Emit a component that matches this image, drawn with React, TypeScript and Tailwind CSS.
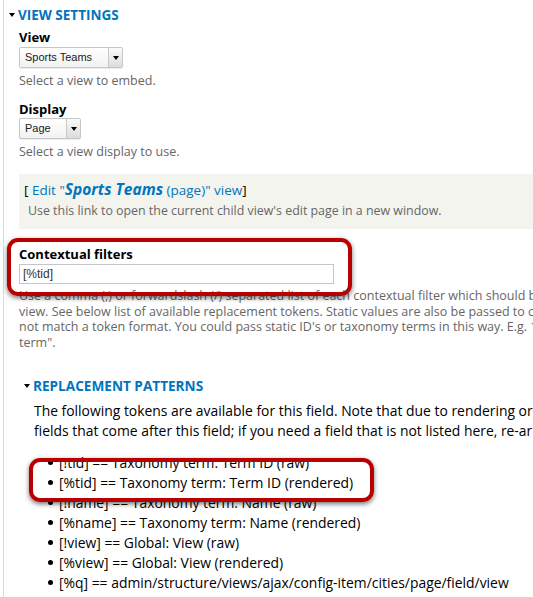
import React from 'react';

const font = 'font-["Lucida_Grande","Open_Sans",sans-serif]';

const Arrow = () => (
  <span className="inline-block w-0 h-0 border-l-[3.5px] border-r-[3.5px] border-t-[4px] border-l-transparent border-r-transparent border-t-black" />
);

const Select = ({ value, width }: { value: string; width: string }) => (
  <div
    className={`flex h-[21px] ${width} border border-[#c6c6c6] rounded-[2px] bg-gradient-to-b from-white to-[#f2f2f2] shadow-[0_1px_1px_rgba(0,0,0,0.08)]`}
  >
    <span className='flex-1 pl-[5px] flex items-center text-[11px] text-[#222] font-["Liberation_Sans",Arial,sans-serif]'>
      {value}
    </span>
    <span className="w-[14px] flex items-center justify-center border-l border-[#c8c8c8] bg-gradient-to-b from-[#fafafa] to-[#dcdcdc]">
      <Arrow />
    </span>
  </div>
);

const Annotation = ({ className }: { className: string }) => (
  <div
    className={`absolute border-[4px] border-[#b80000] rounded-[11px] shadow-[0_2px_5px_rgba(0,0,0,0.55)] ${className}`}
  />
);

const tokens = [
  '[!tid] == Taxonomy term: Term ID (raw)',
  '[%tid] == Taxonomy term: Term ID (rendered)',
  '[!name] == Taxonomy term: Name (raw)',
  '[%name] == Taxonomy term: Name (rendered)',
  '[!view] == Global: View (raw)',
  '[%view] == Global: View (rendered)',
  '[%q] == admin/structure/views/ajax/config-item/cities/page/field/view',
];

export default function App() {
  return (
    <div className={`relative w-[533px] h-[597px] overflow-hidden bg-white ${font}`}>
      <div className="ml-[3px] h-full w-[760px] border-l border-[#d9d9d9] pl-[15px] pt-[5px]">
        <div className="h-[20px] -ml-[10px] flex items-center gap-[3px] text-[13.5px] font-bold text-[#0074bd] uppercase">
          <Arrow />
          View settings
        </div>

        <div className="mt-[4px] h-[16px] leading-[16px] text-[13px] font-bold text-black">View</div>
        <div className="mt-[2px]">
          <Select value="Sports Teams" width="w-[104px]" />
        </div>
        <div className="mt-[5px] h-[16px] leading-[16px] text-[12.5px] text-[#666]">Select a view to embed.</div>

        <div className="mt-[12px] h-[16px] leading-[16px] text-[13px] font-bold text-black">Display</div>
        <div className="mt-[1px]">
          <Select value="Page" width="w-[62px]" />
        </div>
        <div className="mt-[5px] h-[16px] leading-[16px] text-[12.5px] text-[#666]">
          Select a view display to use.
        </div>

        <div className="mt-[14px] h-[55px] bg-[#f4f4ef] pl-[5px] pt-[6px]">
          <div className="h-[18px] leading-[18px] text-[13.5px] text-black">
            [<span className="text-[#0074bd]">
              {' '}Edit "<span className="font-bold italic text-[15.5px]">Sports Teams</span> (page)" view
            </span>]
          </div>
          <div className="mt-[5px] pl-[4px] h-[16px] leading-[16px] text-[12.4px] text-[#666]">
            Use this link to open the current child view's edit page in a new window.
          </div>
        </div>

        <div className="mt-[17px] h-[16px] leading-[16px] text-[13px] font-bold text-black">Contextual filters</div>
        <div className="mt-[2px] w-[315px] h-[20px] border border-[#c6c6c6] flex items-center pl-[3px] text-[12px] text-[#333] font-['Liberation_Sans',Arial,sans-serif]">
          [%tid]
        </div>
        <div className="mt-[4px] text-[12.5px] leading-[15.7px] text-[#666] whitespace-nowrap">
          <div>Use a comma (,) or forwardslash (/) separated list of each contextual filter which should be forwarded to the</div>
          <div>view. See below list of available replacement tokens. Static values are also be passed to child views if they do</div>
          <div>not match a token format. You could pass static ID's or taxonomy terms in this way. E.g. 123 or "my taxonomy</div>
          <div>term".</div>
        </div>

        <div className="pl-[15px]">
          <div className="mt-[25px] h-[20px] -ml-[10px] flex items-center gap-[3px] text-[13.6px] font-bold text-[#0074bd] uppercase">
            <Arrow />
            Replacement patterns
          </div>
          <div className="mt-[5px] text-[13.9px] leading-[20px] text-black whitespace-nowrap">
            <div>The following tokens are available for this field. Note that due to rendering order, you cannot use</div>
            <div>fields that come after this field; if you need a field that is not listed here, re-arrange your fields.</div>
          </div>
          <ul className="mt-[12px] pl-[14px] text-[13.9px] leading-[20px] text-black whitespace-nowrap">
            {tokens.map((t) => (
              <li key={t} className="flex items-center gap-[6px]">
                <span className="w-[5px] h-[5px] rounded-full bg-black" />
                {t}
              </li>
            ))}
          </ul>
        </div>
      </div>

      <Annotation className="left-[7px] top-[238px] w-[345px] h-[58px]" />
      <Annotation className="left-[29px] top-[458px] w-[345px] h-[44px]" />
    </div>
  );
}
